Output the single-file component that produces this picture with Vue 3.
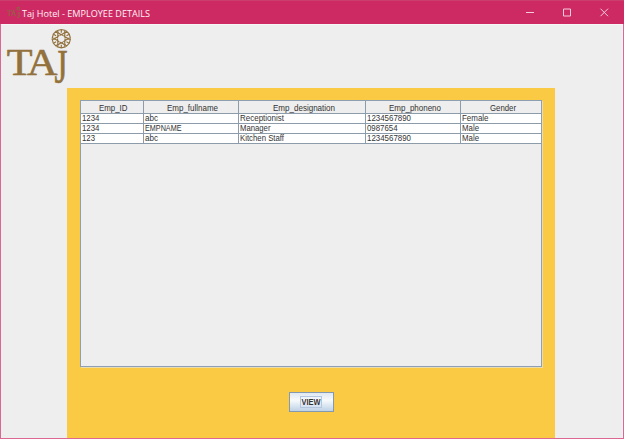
<script setup>
const columns = [
  { label: 'Emp_ID', w: 28.5 },
  { label: 'Emp_fullname', w: 51 },
  { label: 'Emp_designation', w: 62 },
  { label: 'Emp_phoneno', w: 52 },
  { label: 'Gender', w: 26 },
]
const rows = [
  [['1234', 17.5], ['abc', 13], ['Receptionist', 44], ['1234567890', 44], ['Female', 26.5]],
  [['1234', 17.5], ['EMPNAME', 36.5], ['Manager', 30.5], ['0987654', 30.5], ['Male', 17]],
  [['123', 13], ['abc', 13], ['Kitchen Staff', 44], ['1234567890', 44], ['Male', 17]],
]
const spokes = [0, 60, 120, 180, 240, 300]
</script>

<template>
  <main class="window">
    <header class="titlebar">
      <svg class="mini" width="13" height="13" viewBox="6 27 62 59">
        <g class="mini-logo">
          <text x="6" y="75" font-size="37">TA</text>
          <text x="54" y="82" font-size="42">J</text>
          <circle cx="61" cy="38" r="7" />
        </g>
      </svg>
      <svg class="title" width="132" height="16"><text x="0" y="11.800" textLength="128" lengthAdjust="spacingAndGlyphs">Taj Hotel - EMPLOYEE DETAILS</text></svg>
      <svg class="controls" width="84" height="12" viewBox="0 0 84 12">
        <path d="M1 5.500h8M38.500 2h7v7h-7zM75.500 1.700l7.500 7.500M83 1.700l-7.500 7.500" />
      </svg>
    </header>

    <section class="content">
      <svg class="logo" width="67" height="64" viewBox="0 24 67 64">
        <g class="letters">
          <text transform="translate(6.700 74.500) scale(1.140 1)" font-size="37"><tspan>T</tspan><tspan dx="-4.800">A</tspan></text>
          <text transform="translate(54.500 82.800) scale(.9 1.330)" font-size="37">J</text>
        </g>
        <g class="emblem" transform="translate(61.300 38.700)">
          <g v-for="a in spokes" :key="a" :transform="`rotate(${a})`">
            <path d="M-3.900-8.200L0-9.200L3.900-8.200L2.900-5.700L0-4L-2.900-5.700ZM-1.700-3.300L0-4.300L1.700-3.300M0-8.500V-6" />
          </g>
        </g>
      </svg>

      <div class="panel">
        <div class="scroll">
          <table>
            <colgroup><col class="c1"><col class="c2"><col class="c3"><col class="c4"><col class="c5"></colgroup>
            <thead>
              <tr>
                <th v-for="c in columns" :key="c.label">
                  <svg :width="c.w" height="12"><text x="0" y="9.500" :textLength="c.w" lengthAdjust="spacingAndGlyphs">{{ c.label }}</text></svg>
                </th>
              </tr>
            </thead>
            <tbody>
              <tr v-for="(r, i) in rows" :key="i">
                <td v-for="(v, j) in r" :key="j">
                  <svg :width="v[1]" height="9"><text x="0" y="7.300" :textLength="v[1]" lengthAdjust="spacingAndGlyphs">{{ v[0] }}</text></svg>
                </td>
              </tr>
            </tbody>
          </table>
        </div>
        <button class="view">
          <svg width="20" height="10"><text x=".5" y="8.200" textLength="19" lengthAdjust="spacingAndGlyphs">VIEW</text></svg>
        </button>
      </div>
    </section>
  </main>
</template>

<style>
body { margin: 0; overflow: hidden; }
</style>

<style scoped>
.window {
  box-sizing: border-box;
  width: 624px;
  height: 439px;
  display: flex;
  flex-direction: column;
  background: #eee;
  border: 1px solid #dc6795;
  border-top: 0;
}
.titlebar {
  box-sizing: border-box;
  height: 24px;
  flex: none;
  margin: 0 -1px;
  display: flex;
  align-items: center;
  padding: 0 15px 0 7px;
  background: #cd2a64;
  border-top: 1px solid #c93e6c;
}
.mini-logo { fill: #946044; font-family: "Liberation Serif", serif; stroke: #946044; stroke-width: 1; }
.mini-logo circle { fill: none; stroke-width: 5; }
.title {
  margin-left: 2px;
  font: 9.6px "Open Sans", sans-serif;
  fill: #fff0f6;
  overflow: visible;
}
.controls { margin-left: auto; fill: none; stroke: #f6ccdc; stroke-width: 1; }
.content {
  flex: 1;
  display: flex;
  align-items: flex-start;
  border: 1px solid #f6f6f6;
  border-width: 1px 1px 0 0;
}
.logo { flex: none; margin: -1px 0 0 -1px; width: 67px; overflow: visible; }
.letters { fill: #92713d; font-family: "Liberation Serif", serif; stroke: #92713d; stroke-width: .55; }
.emblem { fill: none; stroke: #92713d; stroke-width: 1.15; }
.panel {
  box-sizing: border-box;
  width: 488px;
  height: 350px;
  margin: 63px 0 0;
  padding-top: 12px;
  background: #fbca45;
  display: flex;
  flex-direction: column;
  align-items: center;
}
.scroll {
  box-sizing: border-box;
  width: 462px;
  height: 267px;
  flex: none;
  background: #eee;
  border: 1px solid #8d9fb0;
  box-shadow: 1px 1px 0 #e9dcae;
}
table {
  width: 460px;
  table-layout: fixed;
  border-collapse: separate;
  border-spacing: 0;
  font: 8.8px "Liberation Sans", Arial, sans-serif;
  fill: #333;
}
.c1 { width: 63px; }
.c2 { width: 95px; }
.c3 { width: 127px; }
.c4 { width: 95px; }
.c5 { width: 80px; }
th, td {
  box-sizing: border-box;
  padding: 0;
  line-height: 0;
  border-right: 1px solid #8c9cab;
  border-bottom: 1px solid #8c9cab;
}
th { height: 13px; padding-left: 3px; text-align: center; font-weight: normal; }
td { height: 10px; padding-left: 1.2px; background: #fff; }
th:last-child, td:last-child { border-right: 0; }
th svg, td svg { display: inline-block; vertical-align: top; overflow: visible; }
.view {
  box-sizing: border-box;
  width: 45px;
  height: 20px;
  margin: 25px 0 0;
  padding: 0;
  display: flex;
  align-items: center;
  justify-content: center;
  border: 1px solid #8299af;
  border-radius: 0;
  background: linear-gradient(#dfe8f1, #f7fafc 40%, #bdd1e6);
  font: bold 8.800px "Liberation Sans", Arial, sans-serif;
  fill: #333;
}
.view svg { outline: 1px solid #b3c8df; overflow: visible; }
</style>
